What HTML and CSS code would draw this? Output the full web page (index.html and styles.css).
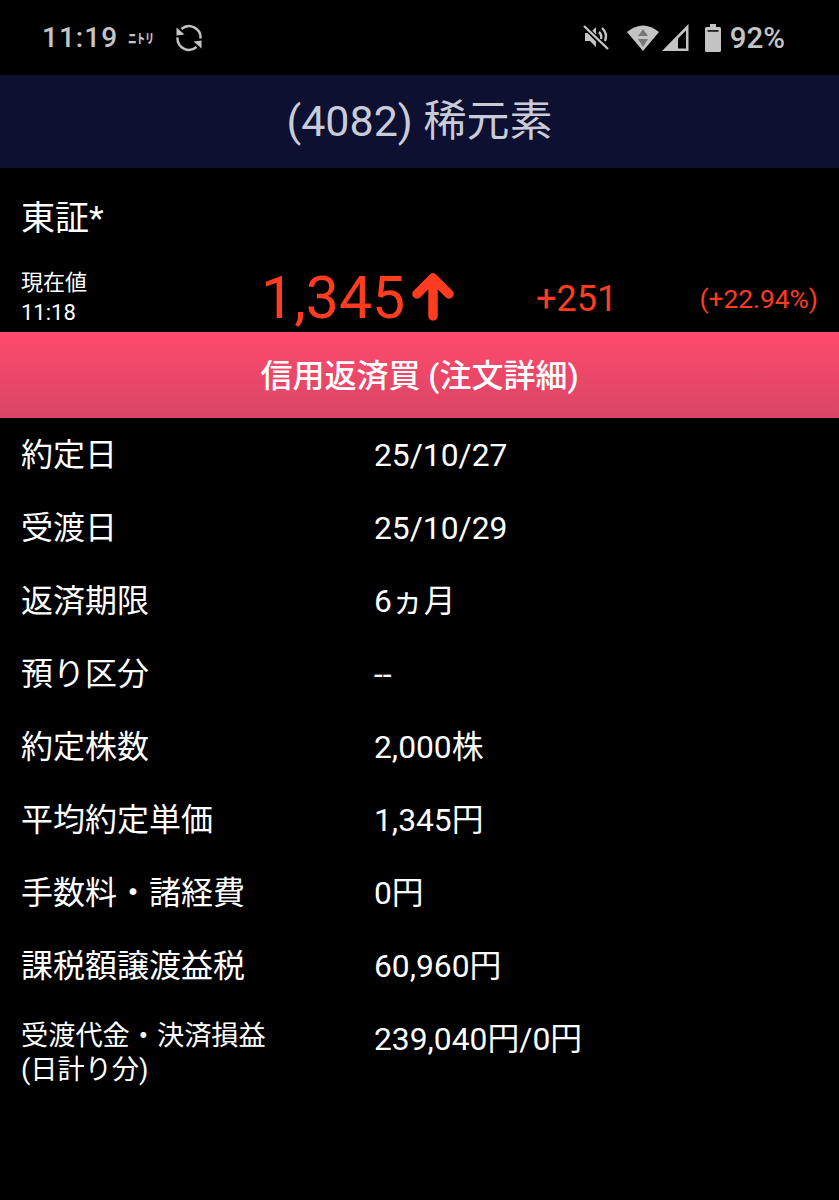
FILE: index.html
```html
<!DOCTYPE html>
<html lang="ja">
<head>
<meta charset="utf-8">
<title>稀元素</title>
<link rel="stylesheet" href="styles.css">
</head>
<body>
<div class="status">
  <div class="status-left">
    <span class="clock">11:19</span>
    <span class="notif">ニトリ</span>
    <svg class="ic-sync" viewBox="0 0 28 28" width="28" height="28"><g fill="none" stroke="#c4c4c4" stroke-width="2.4"><path d="M6.500 5A11.500 11.500 0 0 1 25.500 14.500"/><path d="M21.500 23A11.500 11.500 0 0 1 2.500 13.500"/></g><path d="M1.500 3.500 9.500 10.500 1.500 11.500Z" fill="#c4c4c4"/><path d="M26.500 24.500 18.500 17.500 26.500 16.500Z" fill="#c4c4c4"/></svg>
  </div>
  <div class="status-right">
    <svg class="ic-mute" viewBox="0 0 27 27" width="27" height="27"><path d="M3 9h5l6-6v20l-6-6H3Z" fill="#c4c4c4"/><g fill="none" stroke="#c4c4c4" stroke-width="2.4"><path d="M17 8a7 7 0 0 1 2 7"/><path d="M20 4a12 12 0 0 1 3 13"/></g><path d="M2 2 26 26" stroke="#000" stroke-width="5"/><path d="M2 2 26 25" stroke="#c4c4c4" stroke-width="2.400"/></svg>
    <svg class="ic-wifi" viewBox="0 0 32 27" width="32" height="27"><path d="M0 8Q16-5 32 8L16 27Z" fill="#c4c4c4"/><path d="M16 5 21 12H11ZM16 23 11 15H21Z" fill="#777"/></svg>
    <svg class="ic-signal" viewBox="0 0 27 27" width="27" height="27"><path d="M26.500 0V27H0Z" fill="#c4c4c4"/><path d="M24 6.500V24.500H16V14.500Z" fill="#000"/></svg>
    <svg class="ic-batt" viewBox="0 0 16 28" width="16" height="28"><path d="M5 0h6v3h3.500a1.500 1.500 0 0 1 1.500 1.500V26.500A1.500 1.500 0 0 1 14.500 28H1.500A1.500 1.500 0 0 1 0 26.500V4.500A1.500 1.500 0 0 1 1.500 3H5Z" fill="#c4c4c4"/><rect x="2.500" y="6" width="11" height="1.800" fill="#222"/></svg>
    <span class="pct">92%</span>
  </div>
</div>
<header class="title">(4082) 稀元素</header>
<div class="market">東証*</div>
<div class="quote">
  <div class="q-label"><span>現在値</span><span>11:18</span></div>
  <div class="q-price">1,345<svg class="arrow" viewBox="0 0 42 48" width="42" height="48"><path d="M21 5V43M5 21 21 5 37 21" fill="none" stroke="#ff3b20" stroke-width="9.500" stroke-linecap="round" stroke-linejoin="round"/></svg></div>
  <div class="q-diff">+251</div>
  <div class="q-pct">(+22.94%)</div>
</div>
<div class="banner">信用返済買 (注文詳細)</div>
<dl class="rows">
  <div class="row"><dt>約定日</dt><dd>25/10/27</dd></div>
  <div class="row"><dt>受渡日</dt><dd>25/10/29</dd></div>
  <div class="row"><dt>返済期限</dt><dd>6ヵ月</dd></div>
  <div class="row"><dt>預り区分</dt><dd>--</dd></div>
  <div class="row"><dt>約定株数</dt><dd>2,000株</dd></div>
  <div class="row"><dt>平均約定単価</dt><dd>1,345円</dd></div>
  <div class="row"><dt>手数料・諸経費</dt><dd>0円</dd></div>
  <div class="row"><dt>課税額譲渡益税</dt><dd>60,960円</dd></div>
  <div class="row row-top"><dt class="small">受渡代金・決済損益<br>(日計り分)</dt><dd>239,040円/0円</dd></div>
</dl>
</body>
</html>
```
FILE: styles.css
```css
* { box-sizing: border-box; }
html, body { margin: 0; padding: 0; }
body {
  width: 839px;
  height: 1200px;
  overflow: hidden;
  background: #000;
  color: #fff;
  font-family: Roboto, "Noto Sans CJK JP", sans-serif;
}
.status {
  height: 75px;
  display: flex;
  justify-content: space-between;
  align-items: center;
  padding: 0 54px 0 42px;
  color: #c4c4c4;
}
.status-left, .status-right { display: flex; align-items: center; }
.clock { font-size: 28px; font-weight: 500; letter-spacing: 1px; }
.notif {
  display: inline-block;
  font-size: 13px;
  font-weight: 900;
  margin-left: 10px;
  width: 34px;
  white-space: nowrap;
  transform: scaleX(.66);
  transform-origin: left center;
}
.ic-sync { margin-left: 13px; }
.ic-mute { margin-right: 18px; }
.ic-wifi { margin-right: 3px; }
.ic-signal { margin-right: 16px; }
.ic-batt { margin-right: 9px; }
.pct { font-size: 29.500px; font-weight: 500; }
.title {
  height: 93px;
  background: #0d1030;
  color: #c9cbd8;
  font-size: 43px;
  display: flex;
  align-items: center;
  justify-content: center;
  padding-bottom: 9px;
}
.market {
  height: 98px;
  padding: 25px 0 0 21px;
  font-size: 34px;
  line-height: 50px;
}
.quote {
  height: 66px;
  display: grid;
  grid-template-columns: 261px 239px 140px 1fr;
  color: #ff3b20;
}
.q-label {
  display: flex;
  flex-direction: column;
  padding: 2px 0 0 21px;
  color: #fff;
  font-size: 22px;
  line-height: 30px;
}
.q-price {
  display: flex;
  align-items: center;
  height: 62px;
  font-size: 59px;
  white-space: nowrap;
}
.arrow { margin-left: 7px; }
.q-diff { font-size: 36px; line-height: 66px; padding-left: 36px; }
.q-pct { font-size: 26.300px; line-height: 66px; text-align: right; padding-right: 21px; white-space: nowrap; }
.banner {
  height: 86px;
  background: linear-gradient(#ff4a6b, #d94566);
  font-size: 32px;
  font-weight: 500;
  display: flex;
  align-items: center;
  justify-content: center;
  padding-bottom: 4px;
}
.rows { margin: 0; }
.row {
  display: flex;
  height: 73px;
  align-items: center;
  padding-left: 21px;
  font-size: 32px;
  line-height: 40px;
}
.row dt { width: 353px; }
.row dd { margin: 0; font-size: 31.800px; }
.row-top { align-items: flex-start; padding-top: 17px; height: 90px; }
.row dt.small { font-size: 27.200px; line-height: 34px; }
```
